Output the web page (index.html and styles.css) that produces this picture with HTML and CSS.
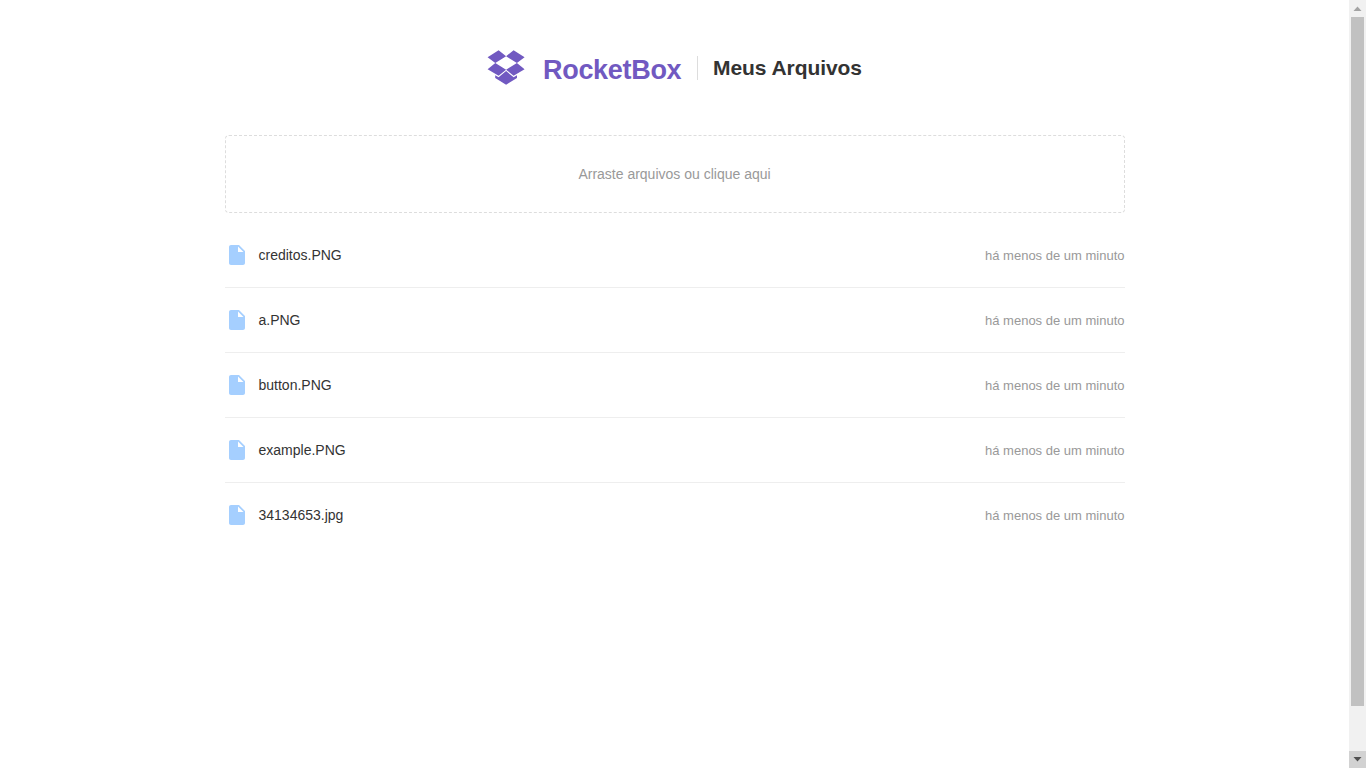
FILE: index.html
```html
<!DOCTYPE html>
<html lang="pt-BR">
<head>
<meta charset="utf-8">
<title>RocketBox</title>
<link rel="stylesheet" href="styles.css">
</head>
<body>
<svg class="defs" width="0" height="0"><symbol id="file" viewBox="0 0 24 24"><path d="M6 2c-1.100 0-1.990.9-1.990 2L4 20c0 1.100.89 2 1.990 2H18c1.100 0 2-.9 2-2V8l-6-6H6zm7 7V3.500L18.500 9H13z"/></symbol></svg>
<div class="page">
<main class="box">
<header class="header">
<svg class="logo" viewBox=".4 0 37 35"><path d="M0 7.300 11 .2 18.500 6.200 7.700 13zM18.500 6.200 26 .2 37 7.300 29.300 13zM7.700 13 18.500 19.700 11 25.800 0 19.300zM29.300 13 37 19.300 26 25.800 18.500 19.700z"/><path d="M7.600 25.300 11 27.200 18.500 21.100 26 27.200 29.400 25.300V27.900L18.500 34.700 7.600 27.900z"/></svg>
<span class="brand">RocketBox</span>
<h1 class="title">Meus Arquivos</h1>
</header>
<div class="upload">Arraste arquivos ou clique aqui</div>
<ul class="files">
<li class="file"><svg class="icon"><use href="#file"/></svg><strong class="name">creditos.PNG</strong><span class="time">há menos de um minuto</span></li>
<li class="file"><svg class="icon"><use href="#file"/></svg><strong class="name">a.PNG</strong><span class="time">há menos de um minuto</span></li>
<li class="file"><svg class="icon"><use href="#file"/></svg><strong class="name">button.PNG</strong><span class="time">há menos de um minuto</span></li>
<li class="file"><svg class="icon"><use href="#file"/></svg><strong class="name">example.PNG</strong><span class="time">há menos de um minuto</span></li>
<li class="file"><svg class="icon"><use href="#file"/></svg><strong class="name">34134653.jpg</strong><span class="time">há menos de um minuto</span></li>
</ul>
</main>
<div class="scrollbar">
<svg class="arrow up" viewBox="0 0 17 17"><path d="M4.500 11 8.500 6.500 12.500 11z"/></svg>
<div class="thumb"></div>
<svg class="arrow down" viewBox="0 0 17 17"><path d="M4.500 6H12.500L8.500 10.500z"/></svg>
</div>
</div>
</body>
</html>
```
FILE: styles.css
```css
* { box-sizing: border-box; margin: 0; padding: 0; }
body { background: #fff; font: 14px "Liberation Sans", Arial, sans-serif; overflow: hidden; }
.defs { display: none; }
.page { display: flex; height: 768px; }
.box { width: 900px; margin: 0 auto; padding-top: 50px; }
.header { display: flex; align-items: center; height: 35px; padding-left: 263px; }
.logo { width: 37px; height: 35px; fill: #7159c1; overflow: visible; }
.brand { margin-left: 18.500px; width: 139px; padding-top: 4px; color: #7159c1; font-size: 27px; letter-spacing: -.3px; font-weight: bold; line-height: 30px; }
.title { margin-left: 15px; border-left: 1px solid #ddd; padding-left: 15px; height: 24px; line-height: 24px; font-size: 21px; letter-spacing: -.06px; color: #333; white-space: nowrap; }
.upload { display: flex; align-items: center; justify-content: center; height: 78px; margin-top: 50px; border: 1px dashed #ddd; border-radius: 4px; color: #999; }
.files { list-style: none; margin-top: 10px; }
.file { display: flex; align-items: center; height: 65px; border-bottom: 1px solid #eee; }
.file:last-child { border-bottom-color: transparent; }
.icon { width: 24px; height: 24px; fill: #a5cfff; }
.name { margin-left: 10px; font-weight: normal; color: #333; }
.time { margin-left: auto; font-size: 13px; color: #999; }
.scrollbar { display: flex; flex-direction: column; justify-content: space-between; align-items: center; width: 17px; background: #f1f1f1; }
.arrow { width: 17px; height: 17px; }
.up { fill: #a3a3a3; }
.down { background: #d2d2d2; fill: #505050; }
.thumb { width: 13px; height: 689px; background: #c1c1c1; margin-bottom: auto; }
```
